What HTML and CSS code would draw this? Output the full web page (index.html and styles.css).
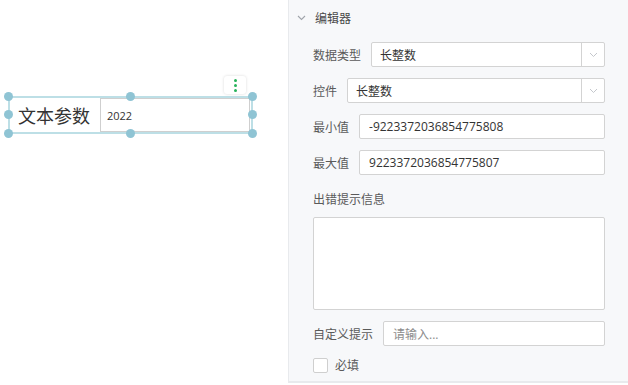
FILE: index.html
```html
<!DOCTYPE html>
<html lang="zh">
<head>
    <meta charset="UTF-8">
    <title>编辑器</title>
    <link rel="stylesheet" href="styles.css">
</head>
<body>
    <div class="canvas">
        <div class="widget">
            <span class="widget-label">文本参数</span>
            <div class="widget-input">2022</div>
            <span class="handle h-tl"></span>
            <span class="handle h-tc"></span>
            <span class="handle h-tr"></span>
            <span class="handle h-ml"></span>
            <span class="handle h-mr"></span>
            <span class="handle h-bl"></span>
            <span class="handle h-bc"></span>
            <span class="handle h-br"></span>
            <div class="widget-menu">
                <i></i><i></i><i></i>
            </div>
        </div>
    </div>
    <div class="panel">
        <div class="panel-header">
            <svg class="chevron" width="9" height="6" viewBox="0 0 9 6"><path d="M1 1l3.5 3.5L8 1" fill="none" stroke="#a0a4ab" stroke-width="1.1"/></svg>
            <span>编辑器</span>
        </div>
        <div class="row">
            <label>数据类型</label>
            <div class="select">
                <span class="value">长整数</span>
                <span class="arrow"><svg width="9" height="6" viewBox="0 0 9 6"><path d="M1 1l3.5 3.5L8 1" fill="none" stroke="#c4c7cc" stroke-width="1"/></svg></span>
            </div>
        </div>
        <div class="row">
            <label>控件</label>
            <div class="select">
                <span class="value">长整数</span>
                <span class="arrow"><svg width="9" height="6" viewBox="0 0 9 6"><path d="M1 1l3.5 3.5L8 1" fill="none" stroke="#c4c7cc" stroke-width="1"/></svg></span>
            </div>
        </div>
        <div class="row">
            <label>最小值</label>
            <div class="input">-9223372036854775808</div>
        </div>
        <div class="row">
            <label>最大值</label>
            <div class="input">9223372036854775807</div>
        </div>
        <div class="block-label">出错提示信息</div>
        <div class="textarea"></div>
        <div class="row">
            <label>自定义提示</label>
            <div class="input placeholder">请输入...</div>
        </div>
        <div class="check-row">
            <span class="checkbox"></span>
            <span>必填</span>
        </div>
    </div>
</body>
</html>
```
FILE: styles.css
```css
body {
    margin: 0;
    display: flex;
    height: 385px;
    overflow: hidden;
    background: #fff;
    font-family: 'Open Sans', 'Noto Sans CJK SC', sans-serif;
    font-size: 12px;
    color: #333;
}
.canvas {
    width: 288px;
    flex-shrink: 0;
    padding: 96px 0 0 8px;
    box-sizing: border-box;
}
.widget {
    position: relative;
    width: 245px;
    height: 38px;
    border: 2px solid #bddfe6;
    box-sizing: border-box;
    display: flex;
    align-items: center;
}
.widget-label {
    font-family: 'Noto Sans CJK SC', sans-serif;
    font-size: 18px;
    color: #333;
    width: 90px;
    padding-left: 8px;
    box-sizing: border-box;
}
.widget-input {
    flex: 1;
    height: 34px;
    margin-right: 1px;
    border: 1px solid #cfcfcf;
    box-sizing: border-box;
    display: flex;
    align-items: center;
    padding-left: 6px;
    font-size: 11px;
    color: #333;
}
.handle {
    position: absolute;
    width: 9px;
    height: 9px;
    border-radius: 50%;
    background: #8fc4d4;
}
.h-tl { left: -6px; top: -6px; }
.h-tc { left: 116px; top: -6px; }
.h-tr { right: -6px; top: -6px; }
.h-ml { left: -6px; top: 12px; }
.h-mr { right: -6px; top: 12px; }
.h-bl { left: -6px; bottom: -6px; }
.h-bc { left: 116px; bottom: -6px; }
.h-br { right: -6px; bottom: -6px; }
.widget-menu {
    position: absolute;
    left: 214px;
    top: -22px;
    width: 22px;
    height: 18px;
    background: #fff;
    border-radius: 3px;
    box-shadow: 0 0 3px rgba(0, 0, 0, 0.15);
    display: flex;
    flex-direction: column;
    align-items: center;
    justify-content: center;
    gap: 2px;
}
.widget-menu i {
    width: 3px;
    height: 3px;
    border-radius: 50%;
    background: #27b35a;
}
.panel {
    flex: 1;
    background: #f7f8fa;
    border-left: 1px solid #e8eaed;
    border-bottom: 2px solid #e8eaed;
    height: 383px;
    box-sizing: border-box;
    padding: 8px 23px 0 24px;
    color: #5a5a5a;
}
.panel-header {
    height: 20px;
    display: flex;
    align-items: center;
    margin-left: -16px;
    gap: 9px;
    color: #4a4a4a;
}
.row {
    display: flex;
    align-items: center;
    height: 25px;
    margin-top: 11px;
    gap: 10px;
}
.panel-header + .row {
    margin-top: 14px;
}
.row label {
    white-space: nowrap;
}
.select, .input {
    flex: 1;
    height: 25px;
    background: #fff;
    border: 1px solid #d3d3d3;
    border-radius: 2px;
    box-sizing: border-box;
    display: flex;
    align-items: center;
    color: #333;
}
.select .value {
    flex: 1;
    padding-left: 8px;
}
.select .arrow {
    width: 22px;
    height: 100%;
    border-left: 1px solid #d3d3d3;
    display: flex;
    align-items: center;
    justify-content: center;
}
.input {
    padding-left: 9px;
}
.input.placeholder {
    color: #8c8c8c;
}
.block-label {
    margin-top: 15px;
    height: 20px;
    line-height: 20px;
}
.textarea {
    margin-top: 7px;
    height: 91px;
    background: #fff;
    border: 1px solid #d3d3d3;
    border-radius: 2px;
}
.check-row {
    margin-top: 9px;
    height: 20px;
    display: flex;
    align-items: center;
    gap: 7px;
}
.checkbox {
    width: 13px;
    height: 13px;
    background: #fff;
    border: 1px solid #cfcfcf;
    border-radius: 2px;
}
```
